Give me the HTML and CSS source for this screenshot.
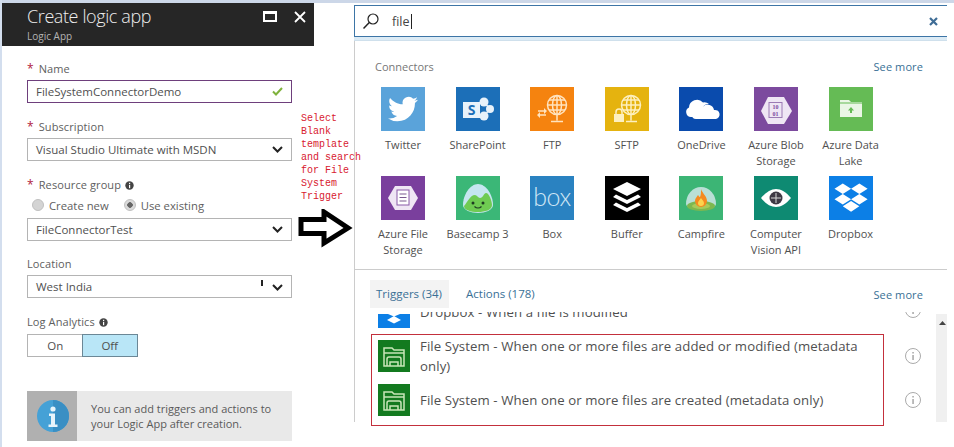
FILE: index.html
```html
<!DOCTYPE html>
<html lang="en">
<head>
<meta charset="utf-8">
<title>Create logic app</title>
<link rel="stylesheet" href="styles.css">
</head>
<body>
<div class="page">
  <section class="blade">
    <header class="blade-head">
      <div>
        <h1 class="blade-title">Create logic app</h1>
        <div class="blade-sub">Logic App</div>
      </div>
      <div class="blade-actions">
        <svg class="head-icon" width="14" height="11" viewBox="0 0 14 11"><rect x="1" y="1.500" width="12" height="8.500" fill="none" stroke="#fff" stroke-width="2"/><rect x="0" y="0" width="14" height="3" fill="#fff"/></svg>
        <svg class="head-icon" width="12" height="12" viewBox="0 0 12 12"><path d="M1 1l10 10M11 1L1 11" stroke="#fff" stroke-width="1.800" fill="none"/></svg>
      </div>
    </header>
    <div class="form">
      <label class="label label-name"><span class="star">*</span>Name</label>
      <div class="field field-active"><span>FileSystemConnectorDemo</span>
        <svg width="11" height="9" viewBox="0 0 11 9"><path d="M1 4.500l3 3 6-6.500" fill="none" stroke="#7fb23c" stroke-width="2"/></svg>
      </div>
      <label class="label label-sub"><span class="star">*</span>Subscription</label>
      <div class="field"><span>Visual Studio Ultimate with MSDN</span>
        <svg class="chev" width="11" height="7" viewBox="0 0 11 7"><path d="M1 1l4.500 4.500L10 1" fill="none" stroke="#222" stroke-width="2"/></svg>
      </div>
      <label class="label label-sub"><span class="star">*</span>Resource group
        <svg class="dot-info" width="9" height="9" viewBox="0 0 9 9"><circle cx="4.500" cy="4.500" r="4.200" fill="#444"/><rect x="4" y="3.800" width="1.200" height="3.400" fill="#fff"/><rect x="4" y="1.800" width="1.200" height="1.200" fill="#fff"/></svg>
      </label>
      <div class="radios">
        <span class="radio"><i class="radio-mark"></i>Create new</span>
        <span class="radio"><i class="radio-mark radio-on"></i>Use existing</span>
      </div>
      <div class="field"><span>FileConnectorTest</span>
        <svg class="chev" width="11" height="7" viewBox="0 0 11 7"><path d="M1 1l4.500 4.500L10 1" fill="none" stroke="#222" stroke-width="2"/></svg>
      </div>
      <label class="label label-loc">Location</label>
      <div class="field"><span>West India</span>
        <i class="tick"></i>
        <svg class="chev chev-loc" width="11" height="7" viewBox="0 0 11 7"><path d="M1 1l4.500 4.500L10 1" fill="none" stroke="#222" stroke-width="2"/></svg>
      </div>
      <label class="label label-log">Log Analytics
        <svg class="dot-info" width="9" height="9" viewBox="0 0 9 9"><circle cx="4.500" cy="4.500" r="4.200" fill="#444"/><rect x="4" y="3.800" width="1.200" height="3.400" fill="#fff"/><rect x="4" y="1.800" width="1.200" height="1.200" fill="#fff"/></svg>
      </label>
      <div class="toggle"><span class="toggle-opt">On</span><span class="toggle-opt toggle-on">Off</span></div>
      <div class="notice">
        <div class="notice-icon">
          <svg width="32" height="32" viewBox="0 0 32 32"><circle cx="16" cy="16" r="16" fill="#45a1d6"/><path d="M16 0a16 16 0 0 1 0 32z" fill="#3a8fc4"/><circle cx="16" cy="9" r="2.600" fill="#e8f4fb"/><path d="M12 13.500h6v11h2.500v2.500h-9v-2.500H14v-8.500h-2z" fill="#e8f4fb"/></svg>
        </div>
        <p class="notice-text">You can add triggers and actions to your Logic App after creation.</p>
      </div>
    </div>
  </section>

  <main class="main">
    <div class="search">
      <svg width="18" height="18" viewBox="0 0 18 18"><circle cx="11" cy="7" r="5" fill="none" stroke="#222" stroke-width="1.200"/><path d="M7.300 10.500L1.500 16.500" stroke="#222" stroke-width="1.500"/></svg>
      <span class="search-text">file</span><i class="caret"></i>
      <svg class="search-x" width="9" height="9" viewBox="0 0 9 9"><path d="M1 1l7 7M8 1L1 8" stroke="#3f6d96" stroke-width="2.200"/></svg>
    </div>
    <div class="search-shadow"></div>
    <div class="panel">
      <div class="connectors">
        <div class="section-head"><span class="section-title">Connectors</span><a class="more">See more</a></div>
        <div class="grid">
          <div class="cell">
            <svg class="tile" viewBox="0 0 44 44"><rect width="44" height="44" fill="#5aa3da"/><g transform="translate(7 7) scale(1.250)"><path fill="#fff" d="M23.953 4.570a10 10 0 01-2.825.775 4.958 4.958 0 002.163-2.723c-.951.555-2.005.959-3.127 1.184a4.920 4.920 0 00-8.384 4.482C7.690 8.095 4.067 6.130 1.640 3.162a4.822 4.822 0 00-.666 2.475c0 1.710.870 3.213 2.188 4.096a4.904 4.904 0 01-2.228-.616v.060a4.923 4.923 0 003.946 4.827 4.996 4.996 0 01-2.212.085 4.936 4.936 0 004.604 3.417 9.867 9.867 0 01-6.102 2.105c-.390 0-.779-.023-1.170-.067a13.995 13.995 0 007.557 2.209c9.053 0 13.998-7.496 13.998-13.985 0-.210 0-.420-.015-.630A9.935 9.935 0 0024 4.590z"/></g></svg>
            <span>Twitter</span>
          </div>
          <div class="cell">
            <svg class="tile" viewBox="0 0 44 44"><rect width="44" height="44" fill="#1c6fb8"/><path d="M28 15l6 7-6 7" fill="none" stroke="#e8f2fa" stroke-width="1.500"/><circle cx="28" cy="15" r="4.500" fill="#e8f2fa"/><circle cx="34" cy="22" r="4" fill="#e8f2fa"/><circle cx="28" cy="29" r="4.500" fill="#e8f2fa"/><rect x="7" y="15" width="17" height="16" fill="#e8f2fa"/><text x="15.500" y="28" text-anchor="middle" class="tile-s">S</text></svg>
            <span>SharePoint</span>
          </div>
          <div class="cell">
            <svg class="tile" viewBox="0 0 44 44"><rect width="44" height="44" fill="#f5830f"/><g fill="none" stroke="#ffe3bf" stroke-width="1.500"><circle cx="27" cy="18" r="9.500"/><ellipse cx="27" cy="18" rx="4.500" ry="9.500"/><path d="M17.500 18h19M19 13h16M19 23h16M27 8.500v25M21 34.500h12"/><path d="M8 24h8M8 28h8"/></g><path d="M14 21l3 3-3 3zM10 25l-3 3 3 3z" fill="#ffe3bf"/></svg>
            <span>FTP</span>
          </div>
          <div class="cell">
            <svg class="tile" viewBox="0 0 44 44"><rect width="44" height="44" fill="#e5b30f"/><g fill="none" stroke="#fdf0bf" stroke-width="1.500"><circle cx="26" cy="18" r="9.500"/><ellipse cx="26" cy="18" rx="4.500" ry="9.500"/><path d="M16.500 18h19M18 13h16M18 23h16M26 8.500v25M21 34.500h11"/><path d="M11 27v-2a3 3 0 0 1 6 0v2"/></g><rect x="9" y="27" width="10" height="8" fill="#fdf0bf"/></svg>
            <span>SFTP</span>
          </div>
          <div class="cell">
            <svg class="tile" viewBox="0 0 44 44"><rect width="44" height="44" fill="#0a4bad"/><path d="M12 30a5 5 0 0 1-2-9.500 8 8 0 0 1 14-5 7 7 0 0 1 6 1.500 6 6 0 0 0-6 3 5 5 0 0 0-6 5 5 5 0 0 0-1 5z" fill="#fff"/><path d="M17 32a4 4 0 0 1 0-8 5.500 5.500 0 0 1 7-4.500 6.500 6.500 0 0 1 11 3.500 4.500 4.500 0 0 1 2 9z" fill="#fff"/></svg>
            <span>OneDrive</span>
          </div>
          <div class="cell">
            <svg class="tile" viewBox="0 0 44 44"><rect width="44" height="44" fill="#7c4a9e"/><path d="M14 10h16l8 14-8 13H14L7 24z" fill="#efe6f4"/><rect x="15" y="15.500" width="13" height="15" fill="#efe6f4" stroke="#9c7ab4" stroke-width="1"/><text x="21.500" y="22" class="tile-num" text-anchor="middle">10</text><text x="21.500" y="29" class="tile-num" text-anchor="middle">01</text></svg>
            <span>Azure Blob Storage</span>
          </div>
          <div class="cell">
            <svg class="tile" viewBox="0 0 44 44"><rect width="44" height="44" fill="#65bb55"/><path d="M11 15v-2h9l2 2h11v15H11z" fill="#eaf6e6"/><path d="M11 16h22" stroke="#65bb55" stroke-width="1"/><path d="M22 20l3 3.500h-2V26h-2v-2.500h-2z" fill="#65bb55"/></svg>
            <span>Azure Data Lake</span>
          </div>
          <div class="cell">
            <svg class="tile" viewBox="0 0 44 44"><rect width="44" height="44" fill="#7a3f9d"/><path d="M14 10h16l7 12-7 12H14L7 22z" fill="#efe6f4"/><rect x="16" y="14" width="12" height="15" fill="#fff" stroke="#8a5aa8" stroke-width="1"/><path d="M18.500 18h7M18.500 21.500h7M18.500 25h7" stroke="#7a5a90" stroke-width="1.200"/></svg>
            <span>Azure File Storage</span>
          </div>
          <div class="cell">
            <svg class="tile" viewBox="0 0 44 44"><rect width="44" height="44" fill="#3bb777"/><path d="M22 8c8 0 15 11 15 21 0 5-8 8-15 8S7 34 7 29C7 19 14 8 22 8z" fill="#c5e6ef"/><path d="M8 30c3-3 6-11 11-11 2 0 3 3 5 3 3 0 4-5 6-5 3 0 6 8 6 12 0 5-7 7-14 7S8 34 8 30z" fill="#6fcb52"/><circle cx="17" cy="27" r="1.500" fill="#1d3b22"/><circle cx="27" cy="27" r="1.500" fill="#1d3b22"/><path d="M18.500 30.500c2 2 5 2 7 0" fill="none" stroke="#1d3b22" stroke-width="1.200"/></svg>
            <span>Basecamp 3</span>
          </div>
          <div class="cell">
            <svg class="tile" viewBox="0 0 44 44"><rect width="44" height="44" fill="#2a82c1"/><text x="22" y="30" text-anchor="middle" class="tile-box">box</text></svg>
            <span>Box</span>
          </div>
          <div class="cell">
            <svg class="tile" viewBox="0 0 44 44"><rect width="44" height="44" fill="#000"/><path d="M22 6l14 7-14 7-14-7z" fill="#fff"/><path d="M11 18.500l11 5.500 11-5.500 3 2.500-14 7-14-7z" fill="#fff"/><path d="M11 26.500l11 5.500 11-5.500 3 2.500-14 7-14-7z" fill="#fff"/></svg>
            <span>Buffer</span>
          </div>
          <div class="cell">
            <svg class="tile" viewBox="0 0 44 44"><rect width="44" height="44" fill="#3cb575"/><path d="M7 28a15 17 0 0 1 30 0c0 3-6 6-15 6S7 31 7 28z" fill="#b9dfd6"/><ellipse cx="22" cy="30" rx="14" ry="5" fill="#7db84f"/><ellipse cx="22" cy="30" rx="9" ry="3" fill="#a8c95a"/><path d="M22 13c1 4 6 7 6 12a6 6 0 0 1-12 0c0-3 2-4 3-6 1 1 1 2 2 2 1-2 1-5 1-8z" fill="#f58a1f"/><path d="M22 22c1 2 3 3 3 5a3 3 0 0 1-6 0c0-2 2-3 3-5z" fill="#fcd34d"/></svg>
            <span>Campfire</span>
          </div>
          <div class="cell">
            <svg class="tile" viewBox="0 0 44 44"><rect width="44" height="44" fill="#0e8a72"/><path d="M7 22c5-6 10-9 15-9s10 3 15 9c-5 6-10 9-15 9s-10-3-15-9z" fill="#fff"/><circle cx="22" cy="22" r="6.500" fill="#3f3a45"/><path d="M22 17v10M17 22h10" stroke="#d8d8d8" stroke-width="1"/></svg>
            <span>Computer Vision API</span>
          </div>
          <div class="cell">
            <svg class="tile" viewBox="0 0 44 44"><rect width="44" height="44" fill="#0c7fe6"/><g transform="translate(5.500 5) scale(1.380)"><path fill="#fff" d="M6 1.807L0 5.629l6 3.822 6.001-3.822L6 1.807zM18 1.807l-6 3.822 6 3.822 6-3.822-6-3.822zM0 13.274l6 3.822 6.001-3.822L6 9.452l-6 3.822zM18 9.452l-6 3.822 6 3.822 6-3.822-6-3.822zM6 18.371l6.001 3.822 6-3.822-6-3.822L6 18.371z"/></g></svg>
            <span>Dropbox</span>
          </div>
        </div>
      </div>
      <div class="tabs-bar">
        <div class="tabs"><a class="tab tab-on">Triggers (34)</a><a class="tab">Actions (178)</a></div>
        <a class="more">See more</a>
      </div>
      <div class="trigger-area">
        <div class="trigger-scroll">
          <div class="rows">
            <div class="row">
              <svg class="row-icon" viewBox="0 0 32 32"><path d="M0 18h10l6 2.500 6-2.500h10v14H0z" fill="#0c7fe6"/><path d="M9 24l7-4 7 4-7 3.500z" fill="#fff"/></svg>
              <span class="row-text">Dropbox - When a file is modified</span>
              <svg class="row-info row-info-top" viewBox="0 0 16 16"><circle cx="8" cy="8" r="7.500" fill="none" stroke="#aaa"/><rect x="7.400" y="7" width="1.300" height="5" fill="#999"/></svg>
            </div>
            <div class="row">
              <svg class="row-icon" viewBox="0 0 32 32"><rect width="32" height="32" fill="#137a1f"/><g fill="none" stroke="#c9e6b8" stroke-width="1.500"><path d="M6 26V8h8l2 2h10v16z"/><path d="M6 13h20"/><path d="M9 26v-7q0-2 2-2h10q2 0 2 2v7"/><path d="M12 26v-4h8v4"/></g></svg>
              <span class="row-text">File System - When one or more files are added or modified (metadata only)</span>
              <svg class="row-info" viewBox="0 0 16 16"><circle cx="8" cy="8" r="7.500" fill="none" stroke="#aaa"/><rect x="7.400" y="7" width="1.300" height="5" fill="#999"/><rect x="7.400" y="4" width="1.300" height="1.500" fill="#999"/></svg>
            </div>
            <div class="row">
              <svg class="row-icon" viewBox="0 0 32 32"><rect width="32" height="32" fill="#137a1f"/><g fill="none" stroke="#c9e6b8" stroke-width="1.500"><path d="M6 26V8h8l2 2h10v16z"/><path d="M6 13h20"/><path d="M9 26v-7q0-2 2-2h10q2 0 2 2v7"/><path d="M12 26v-4h8v4"/></g></svg>
              <span class="row-text">File System - When one or more files are created (metadata only)</span>
              <svg class="row-info" viewBox="0 0 16 16"><circle cx="8" cy="8" r="7.500" fill="none" stroke="#aaa"/><rect x="7.400" y="7" width="1.300" height="5" fill="#999"/><rect x="7.400" y="4" width="1.300" height="1.500" fill="#999"/></svg>
            </div>
          </div>
          <div class="scrollbar"><svg width="7" height="4" viewBox="0 0 7 4"><path d="M3.500 0L7 4H0z" fill="#444"/></svg></div>
        </div>
        <div class="red-box"></div>
      </div>
    </div>
  </main>

  <p class="note">Select Blank template and search for File System Trigger</p>
  <svg class="arrow" width="56" height="40" viewBox="0 0 56 40"><path d="M3 10.500H26V3L50 19 26 34V24.500H3z" fill="#fff" stroke="#000" stroke-width="5" stroke-linejoin="miter"/></svg>
</div>
</body>
</html>
```

FILE: styles.css
```css
* { box-sizing: border-box; }
html, body { margin: 0; padding: 0; background: #fff; }
body {
  width: 954px;
  height: 447px;
  overflow: hidden;
  font-family: "Open Sans", "Liberation Sans", sans-serif;
  color: #505050;
  font-size: 12px;
}
.page {
  position: relative;
  display: flex;
  align-items: flex-start;
  height: 447px;
  padding-top: 3px;
  background: linear-gradient(#ccd7e8 3px, #fff 3px);
}
.page::before {
  content: "";
  position: absolute;
  left: 0; top: 0; bottom: 0;
  width: 2px;
  background: #d3deee;
}
.blade { width: 312px; margin-left: 2px; flex: none; }
.blade-head {
  height: 43px;
  background: #262626;
  color: #fff;
  display: flex;
  justify-content: space-between;
  padding: 1px 8px 0 25px;
}
.blade-title { margin: 0; font-size: 18px; font-weight: 300; line-height: 25px; color: #eee; letter-spacing: -0.4px; }
.blade-sub { font-size: 10px; line-height: 10px; color: #b4b4b4; margin-top: 2px; }
.blade-actions { display: flex; gap: 17px; padding: 7px 0 0; align-items: flex-start; }
.form { padding-left: 25px; width: 290px; }
.label { display: block; font-size: 11px; line-height: 16px; color: #606060; letter-spacing: 0.1px; }
.label-name { margin-top: 15px; height: 19px; }
.label-sub { margin-top: 16px; height: 19px; }
.label-loc { margin-top: 15px; height: 19px; }
.label-log { margin-top: 16px; height: 20px; }
.star { color: #b01c3c; margin-right: 5px; font-size: 12px; }
.dot-info { vertical-align: -1px; margin-left: 1px; }
.field {
  height: 23px;
  width: 265px;
  border: 1px solid #b4b4b4;
  padding: 0 8px;
  display: flex;
  align-items: center;
  justify-content: space-between;
  font-size: 11.500px;
  color: #505050;
}
.field span { flex: 1; }
.field-active { border-color: #6e3f7c; }
.chev { margin-left: 4px; flex: none; }
.chev-loc { margin-left: 9px; margin-top: 2px; }
.tick { width: 2px; height: 6px; background: #222; flex: none; margin-top: -7px; }
.radios { display: flex; height: 16px; gap: 15px; align-items: center; margin: 1px 0 5px 5px; }
.radio { display: inline-flex; align-items: center; gap: 5px; font-size: 11.300px; color: #606060; }
.radio-mark { width: 12px; height: 12px; border-radius: 50%; background: #d4d4d4; border: 1px solid #c0c0c0; }
.radio-on { background: radial-gradient(circle, #666 0 2.500px, #dadada 3px); }
.toggle { display: flex; width: 111px; height: 23px; border: 1px solid #b4b4b4; }
.toggle-opt { flex: 1; text-align: center; line-height: 21px; font-size: 11.500px; }
.toggle-on { background: #b9e6f7; outline: 1px solid #6b8796; }
.notice {
  margin-top: 34px;
  width: 265px;
  height: 50px;
  display: flex;
  background: #e9e9e9;
}
.notice-icon { width: 50px; flex: none; background: #b0b0b0; display: flex; align-items: center; justify-content: center; padding-left: 1px; }
.notice-text { margin: 0; padding: 10px 0 0 14px; font-size: 11px; line-height: 15px; color: #5a5a5a; }
.main { margin-left: 40px; width: 593px; flex: none; margin-top: 2px; }
.search {
  height: 32px;
  border: 1px solid #3d75a6;
  border-width: 1px 0 1px 1px;
  display: flex;
  align-items: center;
  padding: 0 9px 0 7px;
  font-size: 12.500px;
  color: #444;
}
.search-text { margin-left: 12px; }
.caret { width: 1px; height: 15px; background: #222; margin-left: 1px; }
.search-x { margin-left: auto; }
.search-shadow { height: 4px; background: #dcebf5; border-bottom: 1px solid #cfe0ec; }
.panel { border-left: 1px solid #ccc; height: 381px; }
.connectors { border-bottom: 1px solid #ccc; height: 229px; }
.section-head {
  display: flex;
  justify-content: space-between;
  padding: 16px 24px 0 20px;
  height: 46px;
}
.section-title { font-size: 11px; line-height: 20px; color: #777; }
.more { font-size: 11px; line-height: 20px; color: #3a7096; letter-spacing: 0.1px; }
.tabs-bar .more { padding-top: 5px; }
.grid {
  display: grid;
  grid-template-columns: repeat(7, 74.600px);
  grid-auto-rows: 82px;
  row-gap: 7px;
  padding-left: 10.700px;
}
.cell {
  display: flex;
  flex-direction: column;
  align-items: center;
  text-align: center;
  gap: 6px;
  font-size: 11px;
  line-height: 16px;
  color: #505050;
}
.cell span { width: 70px; }
.tile { width: 44px; height: 44px; flex: none; display: block; }
.tile-s { font: 700 14px "Open Sans", sans-serif; fill: #1c6fb8; }
.tile-num { font: 700 6px "Liberation Serif", serif; fill: #7c4a9e; }
.tile-box { font: 300 25px "Lato", sans-serif; fill: #cfe6f5; letter-spacing: -0.5px; }
.tabs-bar {
  height: 38px;
  display: flex;
  justify-content: space-between;
  padding: 10px 24px 0 15px;
}
.tabs { display: flex; height: 28px; }
.tab { font-size: 11.500px; line-height: 28px; color: #3a7096; padding: 0 5px; margin-right: 7px; }
.tab-on { background: #f3f3f3; width: 79px; margin-right: 12px; padding-left: 6px; }
.trigger-area { position: relative; height: 114px; padding-top: 4px; }
.trigger-scroll { height: 110px; overflow: hidden; display: flex; align-items: flex-start; }
.rows { width: 581px; margin-top: -22px; flex: none; }
.row { height: 44px; display: flex; align-items: center; padding-left: 23px; }
.row-icon { width: 32px; height: 32px; flex: none; display: block; }
.row-text { margin-left: 10px; width: 445px; font-size: 13.200px; line-height: 20px; color: #505050; letter-spacing: 0.1px; }
.row-info { width: 16px; height: 16px; flex: none; margin-left: 40px; }
.row-info-top { margin-top: -4px; }
.scrollbar { width: 11px; height: 108px; margin-top: 2px; background: #f0f0f0; padding: 7px 0 0 3px; flex: none; line-height: 0; }
.red-box { position: absolute; left: 16px; top: 26px; width: 513px; height: 92px; border: 1px solid #c3303c; }
.note {
  position: absolute;
  left: 301px;
  top: 112px;
  width: 62px;
  margin: 0;
  font: 10px/13px "Liberation Mono", monospace;
  color: #d8202f;
}
.arrow { position: absolute; left: 298px; top: 209px; }
```
